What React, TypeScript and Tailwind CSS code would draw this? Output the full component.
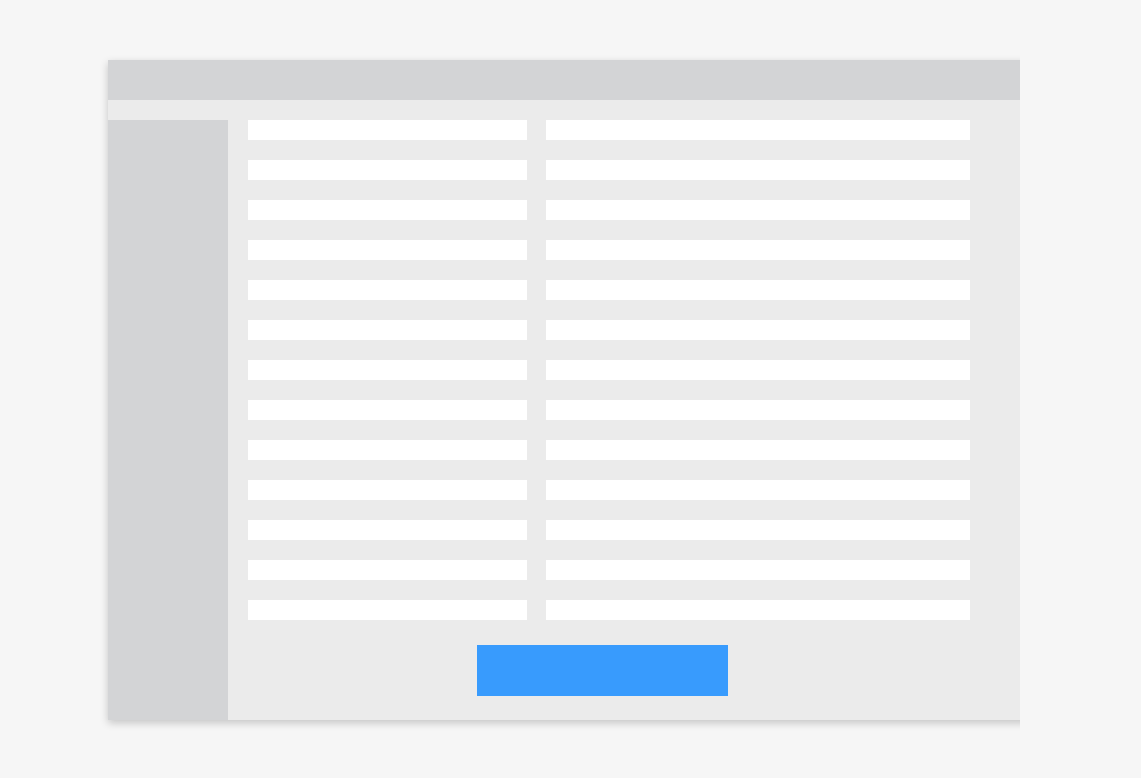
import React from 'react';

const rows = Array.from({ length: 13 }, (_, i) => i);

export default function App() {
  return (
    <div className="min-h-screen w-full bg-[#f6f6f6]">
      <div className="w-[1020px] overflow-hidden pl-[108px] pt-[60px] pb-[58px]">
        <div className="w-[1000px] flex flex-col bg-[#ebebeb] shadow-[0_3px_8px_rgba(0,0,0,0.2)]">
          <div className="h-[40px] bg-[#d3d4d6]" />
          <div className="h-[20px]" />
          <div className="flex">
            <aside className="w-[120px] shrink-0 bg-[#d3d4d6]" />
            <main className="flex-1 pl-[20px]">
              <div className="grid grid-cols-[279px_424px] gap-x-[19px] gap-y-[20px]">
                {rows.map((r) => (
                  <React.Fragment key={r}>
                    <div className="h-[20px] bg-white" />
                    <div className="h-[20px] bg-white" />
                  </React.Fragment>
                ))}
              </div>
              <div className="pt-[25px] pb-[24px] pl-[229px]">
                <button className="block w-[251px] h-[51px] bg-[#389bfd]" />
              </div>
            </main>
          </div>
        </div>
      </div>
    </div>
  );
}
